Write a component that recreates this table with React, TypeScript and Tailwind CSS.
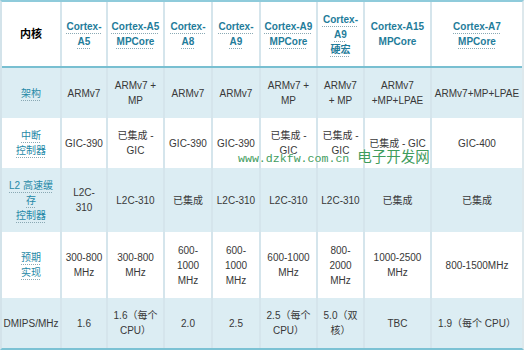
const cols = 'grid grid-cols-[58px_44px_55px_46px_46px_55px_45px_65px_90px] gap-x-[2px]';

const head: string[][] = [
  ['Cortex-', 'A5'],
  ['Cortex-A5', 'MPCore'],
  ['Cortex-', 'A8'],
  ['Cortex-', 'A9'],
  ['Cortex-A9', 'MPCore'],
  ['Cortex-', 'A9', '硬宏'],
  ['Cortex-A15', 'MPCore'],
  ['Cortex-A7', 'MPCore'],
];

const rows: { label: string[]; link: boolean; blue: boolean; h: string; cells: string[][] }[] = [
  {
    label: ['架构'],
    link: true,
    blue: true,
    h: 'h-[50px]',
    cells: [['ARMv7'], ['ARMv7 +', 'MP'], ['ARMv7'], ['ARMv7'], ['ARMv7 +', 'MP'], ['ARMv7', '+ MP'], ['ARMv7', '+MP+LPAE'], ['ARMv7+MP+LPAE']],
  },
  {
    label: ['中断', '控制器'],
    link: true,
    blue: false,
    h: 'h-[50px]',
    cells: [['GIC-390'], ['已集成 -', 'GIC'], ['GIC-390'], ['GIC-390'], ['已集成 -', 'GIC'], ['已集成 -', 'GIC'], ['已集成 - GIC'], ['GIC-400']],
  },
  {
    label: ['L2 高速缓', '存', '控制器'],
    link: true,
    blue: true,
    h: 'h-[64px]',
    cells: [['L2C-', '310'], ['L2C-310'], ['已集成'], ['L2C-310'], ['L2C-310'], ['L2C-310'], ['已集成'], ['已集成']],
  },
  {
    label: ['预期', '实现'],
    link: true,
    blue: false,
    h: 'h-[66px]',
    cells: [['300-800', 'MHz'], ['300-800', 'MHz'], ['600-', '1000', 'MHz'], ['600-', '1000', 'MHz'], ['600-1000', 'MHz'], ['800-', '2000', 'MHz'], ['1000-2500', 'MHz'], ['800-1500MHz']],
  },
  {
    label: ['DMIPS/MHz'],
    link: false,
    blue: true,
    h: 'h-[50px]',
    cells: [['1.6'], ['1.6（每个', 'CPU）'], ['2.0'], ['2.5'], ['2.5（每个', 'CPU）'], ['5.0（双', '核）'], ['TBC'], ['1.9（每个 CPU）']],
  },
];

const Lines = ({ lines, className }: { lines: string[]; className?: string }) => (
  <div className="flex flex-col items-center">
    {lines.map((l, i) => (
      <span key={i} className={className}>
        {l}
      </span>
    ))}
  </div>
);

const link = 'underline decoration-dotted decoration-[#8aa9b4] underline-offset-[3px]';

export default function App() {
  return (
    <div className="relative w-[525px] h-[353px] bg-white font-['Liberation_Sans','Noto_Sans_CJK_SC',sans-serif] text-[10px] leading-[15px] text-[#383838] overflow-hidden">
      <div className="w-[524px] border-x-2 border-l-[#d3e3ea] border-r-[#dde8ec] border-t-2 border-t-[#8fcbdb] border-b-2 border-b-[#7cc2d4] bg-[#d5e5ec]">
        {/* header */}
        <div className={`${cols} h-[66px] border-b-2 border-[#78bfd1]`}>
          <div className="bg-white flex items-center justify-center font-bold text-black text-[11px]">内核</div>
          {head.map((h, i) => (
            <div key={i} className="bg-white flex items-center justify-center font-bold text-[#1f7c9a]">
              <Lines lines={h} className={i === 6 ? '' : link} />
            </div>
          ))}
        </div>
        {rows.map((r, ri) => (
          <div key={ri} className={`${cols} ${r.h}`}>
            <div className={`${r.blue ? 'bg-[#dcedf3]' : 'bg-white'} flex items-center justify-center`}>
              {r.link ? (
                <Lines lines={r.label} className={`${link} text-[#2689a7]`} />
              ) : (
                <Lines lines={r.label} />
              )}
            </div>
            {r.cells.map((c, ci) => (
              <div
                key={ci}
                className={`${r.blue ? 'bg-[#dcedf3]' : 'bg-white'} flex items-center justify-center text-center`}
              >
                <Lines lines={c} />
              </div>
            ))}
          </div>
        ))}
      </div>
      {/* watermark */}
      <div className="absolute left-[238px] top-[148px] flex items-baseline text-[#3f9c5d] [text-shadow:0_0_2px_#fff,0_0_3px_#fff,0_0_3px_#fff] whitespace-nowrap">
        <span className="font-['Liberation_Mono',monospace] text-[11.6px]">www.dzkfw.com.cn</span>
        <span className="ml-[8px] font-['Noto_Sans_CJK_SC',sans-serif] text-[14.5px]">电子开发网</span>
      </div>
    </div>
  );
}
